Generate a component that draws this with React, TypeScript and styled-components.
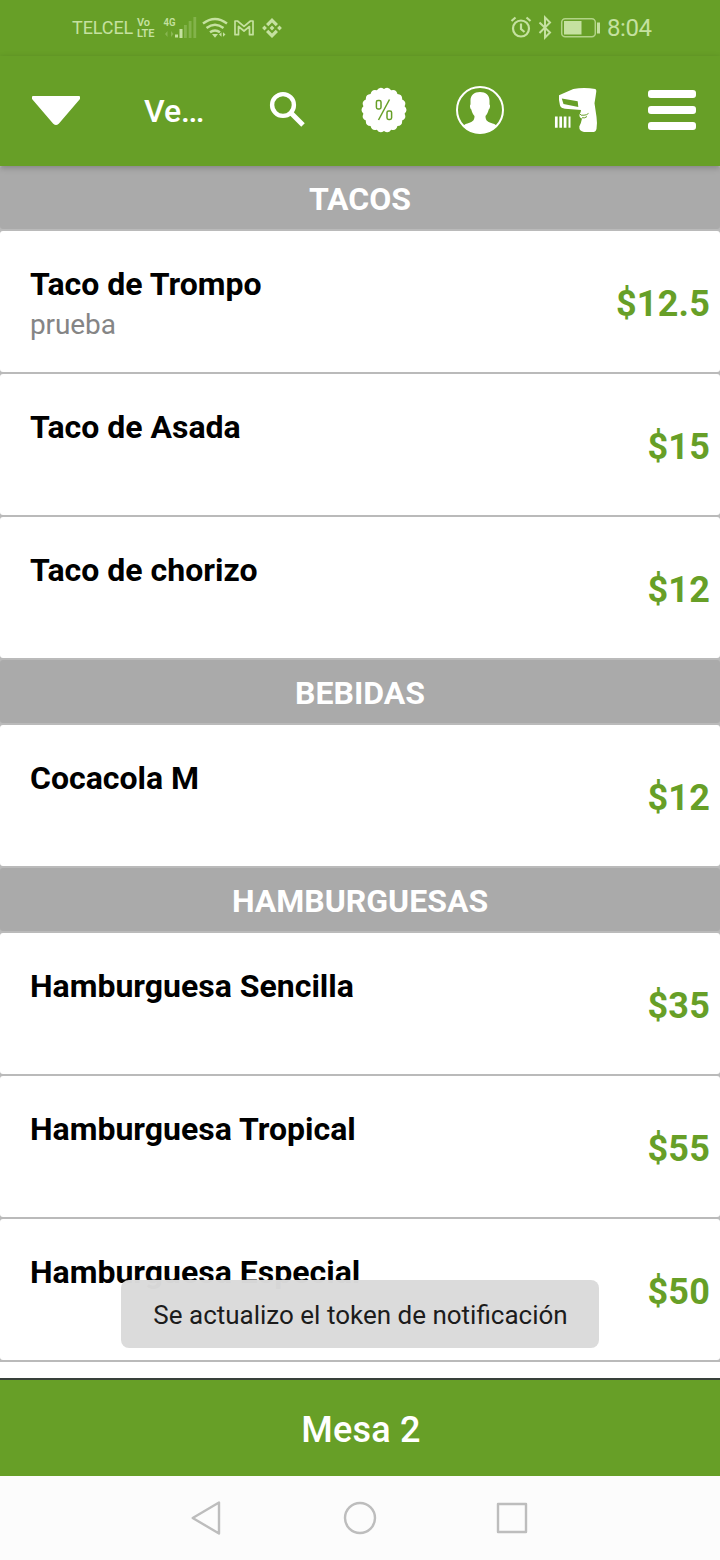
import React from "react";
import styled, { createGlobalStyle } from "styled-components";

const GREEN = "#679f27";

const GlobalStyle = createGlobalStyle`
  * { box-sizing: border-box; }
  body { margin: 0; background: #fff; font-family: Roboto, "Liberation Sans", sans-serif; }
`;

const Screen = styled.div`
  position: relative;
  display: flex;
  flex-direction: column;
  width: 720px;
  height: 1560px;
  overflow: hidden;
  background: #fff;
`;

const StatusBar = styled.div`
  display: flex;
  justify-content: space-between;
  align-items: center;
  flex: none;
  height: 56px;
  padding: 0 67px 0 72px;
  background: ${GREEN};
  color: #c5e1a0;
`;

const StatusGroup = styled.div`
  display: flex;
  align-items: center;
  height: 56px;
`;

const Carrier = styled.span`
  width: 65px;
  font-size: 18px;
  line-height: 24px;
  letter-spacing: -0.1px;
`;

const Volte = styled.span`
  display: flex;
  flex-direction: column;
  width: 26px;
  font-size: 11px;
  font-weight: 600;
  line-height: 11px;
  letter-spacing: -0.1px;
`;

const Clock = styled.span`
  width: 46px;
  margin-left: 6px;
  font-size: 24px;
  line-height: 28px;
  letter-spacing: -0.4px;
`;

const AppBar = styled.header`
  position: relative;
  z-index: 1;
  display: grid;
  grid-template-columns: 112px 128px repeat(5, 96px);
  align-items: center;
  flex: none;
  height: 110px;
  padding-bottom: 2px;
  background: ${GREEN};
  box-shadow: 0 2px 6px rgba(0, 0, 0, 0.22);
`;

const BarButton = styled.button`
  display: flex;
  justify-content: center;
  align-items: center;
  height: 96px;
  padding: 0;
  border: 0;
  background: transparent;
  color: #fff;
`;

const BarTitle = styled.h1`
  margin: 0;
  padding: 2px 0 0 32px;
  color: #fff;
  font-size: 32px;
  font-weight: 500;
  line-height: 40px;
`;

const TitleDots = styled.span`
  letter-spacing: -1.6px;
`;

const Menu = styled.main`
  flex: 1;
  min-height: 0;
  overflow: hidden;
  background: #bababa;
`;

const MenuEnd = styled.div`
  height: 16px;
  background: #fff;
`;

const SectionTitle = styled.h2`
  height: 63px;
  margin: 0 0 2px;
  padding-top: 1px;
  border-radius: 3px;
  background: #aaa;
  color: #fff;
  font-size: 32px;
  font-weight: 700;
  line-height: 64px;
  text-align: center;
`;

const Item = styled.article`
  display: flex;
  justify-content: space-between;
  align-items: center;
  height: 141px;
  margin-bottom: 2px;
  padding: 0 10px 0 30px;
  border-radius: 3px;
  background: #fff;
`;

const ItemText = styled.div`
  height: 80px;
`;

const ItemName = styled.h3`
  margin: 0;
  color: #000;
  font-size: 32px;
  font-weight: 700;
  line-height: 44px;
`;

const ItemNote = styled.p`
  margin: 0;
  padding-top: 1px;
  color: #858585;
  font-size: 28px;
  line-height: 36px;
  letter-spacing: -0.1px;
`;

const Price = styled.span`
  padding-top: 5px;
  color: ${GREEN};
  font-size: 36px;
  font-weight: 700;
  line-height: 44px;
  letter-spacing: 0.2px;
`;

const TableBar = styled.footer`
  flex: none;
  height: 98px;
  padding: 1px 0 0 2px;
  border-top: 2px solid #38403a;
  background: ${GREEN};
  color: #fff;
  font-size: 36px;
  font-weight: 500;
  line-height: 98px;
  letter-spacing: 0.25px;
  text-align: center;
`;

const NavBar = styled.nav`
  display: flex;
  justify-content: center;
  align-items: center;
  gap: 112px;
  flex: none;
  height: 84px;
  background: #fcfcfc;
`;

const Toast = styled.div`
  position: absolute;
  z-index: 2;
  left: 121px;
  top: 1280px;
  width: 478px;
  height: 68px;
  padding: 1px 0 0 1px;
  border-radius: 8px;
  background: rgba(218, 218, 218, 0.98);
  color: #1c1c1c;
  font-size: 26px;
  line-height: 68px;
  text-align: center;
  white-space: nowrap;
`;

const sections = [
  {
    title: "TACOS",
    items: [
      { name: "Taco de Trompo", note: "prueba", price: "$12.5" },
      { name: "Taco de Asada", price: "$15" },
      { name: "Taco de chorizo", price: "$12" },
    ],
  },
  { title: "BEBIDAS", items: [{ name: "Cocacola M", price: "$12" }] },
  {
    title: "HAMBURGUESAS",
    items: [
      { name: "Hamburguesa Sencilla", price: "$35" },
      { name: "Hamburguesa Tropical", price: "$55" },
      { name: "Hamburguesa Especial", price: "$50" },
    ],
  },
];

const sealPath = (() => {
  const n = 18;
  const pt = (r: number, k: number) => {
    const a = (k * Math.PI) / n - Math.PI / 2;
    return `${(24 + r * Math.cos(a)).toFixed(2)} ${(24 + r * Math.sin(a)).toFixed(2)}`;
  };
  let d = `M${pt(20.9, 0)}`;
  for (let i = 0; i < n; i++) d += `Q${pt(24.4, i * 2 + 1)} ${pt(20.9, i * 2 + 2)}`;
  return d + "Z";
})();

const SignalIcons = () => (
  <svg width="122" height="30" viewBox="163 13 122 30" fill="none" stroke="currentColor">
    <text x="163.500" y="25.500" fontSize="11.500" fontWeight="600" fill="currentColor" stroke="none" textLength="12" lengthAdjust="spacingAndGlyphs">4G</text>
    <g fill="currentColor" stroke="none">
      <path d="M165 34l2.500-3v6zM171 31l2.500 3-2.500 3z" opacity=".35" />
      <rect x="175" y="34.500" width="3" height="3" />
      <rect x="179.500" y="29" width="3" height="9" />
      <g opacity=".3">
        <rect x="184" y="25" width="2.800" height="13" />
        <rect x="188.700" y="21" width="2.800" height="17" />
        <rect x="193.400" y="17" width="2.800" height="21" />
      </g>
    </g>
    <path d="M203 23.500q12-9 24 0M206.500 28q8.500-6.500 17 0M210 32.200q5-3.500 10 0" strokeWidth="2.400" />
    <path d="M212 34h6l-3 3.800zM219 34.500l2.500-2.200v4.400zM223 32.300l2.500 2.200-2.500 2.200z" fill="currentColor" stroke="none" />
    <path d="M235 34.700V21h2.500l6.500 5.300 6.500-5.300h2.500v13.700h-3.500v-8.200l-5.500 4.500-5.500-4.500v8.200z" strokeWidth="1.700" strokeLinejoin="round" />
    <path d="M272 18l6 6-2.300 2.300-3.700-3.700-3.700 3.700L266 24zM272 38l6-6-2.300-2.300-3.700 3.700-3.700-3.700L266 32zM272 25.600l2.400 2.400-2.400 2.400-2.400-2.400zM264.500 25.600l2.400 2.400-2.400 2.400-2.400-2.400zM279.500 25.600l2.400 2.400-2.400 2.400-2.400-2.400z" fill="currentColor" stroke="none" />
  </svg>
);

const DeviceIcons = () => (
  <svg width="92" height="30" viewBox="509 13 92 30" fill="none" stroke="currentColor">
    <circle cx="521" cy="28.500" r="8" strokeWidth="2.200" />
    <path d="M521 23.500v5.500l3.500 3M511.500 21l4-3.500M530.500 21l-4-3.500" strokeWidth="2.200" />
    <path d="M539.500 22.500l10.500 10-5 5v-20l5 5-10.500 10.500" strokeWidth="2" />
    <rect x="561.700" y="18.700" width="33.600" height="18" rx="3.500" strokeWidth="1.500" opacity=".8" />
    <rect x="564" y="21" width="17.500" height="13.500" fill="currentColor" stroke="none" />
    <rect x="597" y="22.500" width="3" height="11" fill="currentColor" stroke="none" />
  </svg>
);

const CaretIcon = () => (
  <svg width="48" height="30" viewBox="0 0 48 30" fill="currentColor">
    <path d="M1 2h46v1.500L26 28q-2 1.800-4 0L1 3.500z" stroke="currentColor" strokeWidth="2" strokeLinejoin="round" />
  </svg>
);

const SearchIcon = () => (
  <svg width="48" height="48" viewBox="0 0 48 48" fill="none" stroke="currentColor">
    <circle cx="19" cy="19" r="10.900" strokeWidth="4.400" />
    <path d="M27.500 27.500L39 39" strokeWidth="5" />
  </svg>
);

const DiscountIcon = () => (
  <svg width="48" height="48" viewBox="0 0 48 48" fill="none">
    <path d={sealPath} fill="currentColor" />
    <g stroke={GREEN} strokeWidth="1.500">
      <path d="M29.500 13.500L18.500 34" />
      <rect x="16.400" y="14.500" width="4.600" height="8.400" rx="1.600" />
      <rect x="27" y="25" width="4.600" height="8.400" rx="1.600" />
    </g>
  </svg>
);

const ProfileIcon = () => (
  <svg width="48" height="48" viewBox="0 0 48 48" fill="none">
    <circle cx="24" cy="24" r="23" stroke="currentColor" strokeWidth="2" />
    <path d="M24 6c6 0 9.800 3.500 9.500 9.500v3c1 .5.500 4-.8 5-.7 3-1.700 4.800-3.200 6.500 0 4 1.500 5.500 5 6.700 3 1 5 1.500 6.500 3.300A23.500 23.500 0 0 1 7 40c1.500-1.800 3.500-2.300 6.500-3.300 3.500-1.200 5-2.700 5-6.700-1.500-1.700-2.500-3.500-3.200-6.500-1.300-1-1.800-4.500-.8-5v-3C14.200 9.500 18 6 24 6z" fill="currentColor" />
  </svg>
);

const ScannerIcon = () => (
  <svg width="48" height="48" viewBox="0 0 48 48" fill="none">
    <path d="M7 9.300L21.300 3Q32 1 43.300 3q1.300.6 1 2.500-.8 6-1.800 11.800 1 7 2 13.400Q45.500 38 44.500 43q-.5 2.500-2.500 3H32q-5-1-4.700-5.500 2-4 2.700-8-3-1-2.500-4 1.500-2 1.500-4.500L13 22.700q-4-.5-5-3.200Q6.500 14 7 9.300z" fill="currentColor" />
    <path d="M9.800 12.500l1.700 5.600L26.300 21l-.6-5.800z" fill={GREEN} />
    <path d="M27.500 27.500q1 2.500 4.500 1.700 2.500 0 4.500-1.800M30 31.800q3 .6 5-1.300" stroke={GREEN} strokeWidth="1" />
    <path d="M4.300 30.500v11.200M8.700 30.500v11.200M13.100 30.500v11.200" stroke="currentColor" strokeWidth="2.700" />
    <path d="M17.500 30.500v11.200" stroke="currentColor" strokeWidth="2" />
  </svg>
);

const MenuIcon = () => (
  <svg width="48" height="40" viewBox="0 0 48 40" fill="currentColor">
    <rect width="48" height="8" rx="3" />
    <rect y="16" width="48" height="8" rx="3" />
    <rect y="32" width="48" height="8" rx="3" />
  </svg>
);

const NavIcon = ({ path }: { path: string }) => (
  <svg width="40" height="40" viewBox="0 0 40 40" fill="none" stroke="#bdbdbd" strokeWidth="2.400" strokeLinejoin="round">
    <path d={path} />
  </svg>
);

export default function App() {
  return (
    <Screen>
      <GlobalStyle />
      <StatusBar>
        <StatusGroup>
          <Carrier>TELCEL</Carrier>
          <Volte><span>Vo</span><span>LTE</span></Volte>
          <SignalIcons />
        </StatusGroup>
        <StatusGroup>
          <DeviceIcons />
          <Clock>8:04</Clock>
        </StatusGroup>
      </StatusBar>
      <AppBar>
        <BarButton><CaretIcon /></BarButton>
        <BarTitle>Ve<TitleDots>...</TitleDots></BarTitle>
        <BarButton><SearchIcon /></BarButton>
        <BarButton><DiscountIcon /></BarButton>
        <BarButton><ProfileIcon /></BarButton>
        <BarButton><ScannerIcon /></BarButton>
        <BarButton><MenuIcon /></BarButton>
      </AppBar>
      <Menu>
        {sections.map((section) => (
          <section key={section.title}>
            <SectionTitle>{section.title}</SectionTitle>
            {section.items.map((item) => (
              <Item key={item.name}>
                <ItemText>
                  <ItemName>{item.name}</ItemName>
                  {"note" in item && <ItemNote>{item.note}</ItemNote>}
                </ItemText>
                <Price>{item.price}</Price>
              </Item>
            ))}
          </section>
        ))}
        <MenuEnd />
      </Menu>
      <TableBar>Mesa 2</TableBar>
      <NavBar>
        <NavIcon path="M4.700 20L31 4.500v31z" />
        <NavIcon path="M35 20a15 15 0 1 1-30 0a15 15 0 1 1 30 0z" />
        <NavIcon path="M6 6h28v28H6z" />
      </NavBar>
      <Toast>Se actualizo el token de notificación</Toast>
    </Screen>
  );
}
